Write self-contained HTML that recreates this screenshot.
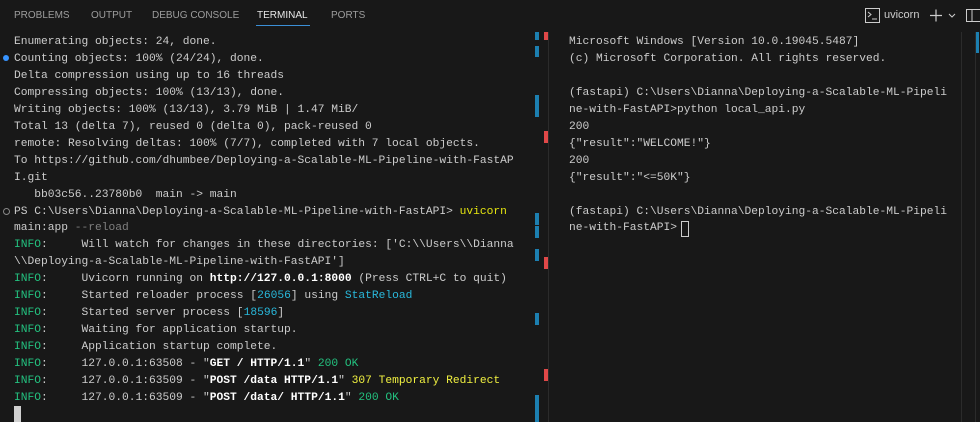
<!DOCTYPE html>
<html><head><style>
html,body{margin:0;padding:0;}
body{width:980px;height:422px;background:#181818;position:relative;overflow:hidden;font-family:"Liberation Mono",monospace;color:#cccccc;}
.tabs{position:absolute;top:0;left:0;width:980px;height:32px;font-family:"Liberation Sans",sans-serif;font-size:10px;color:#9d9d9d;}
.tabs span{position:absolute;top:10px;}
.t{position:absolute;font-size:11.26px;line-height:16.95px;white-space:pre;}
.g{color:#23c17f}.b{color:#29b8db}.y{color:#f0f040}.d{color:#7f7f7f}.w{color:#fff;font-weight:bold}.uy{color:#e5e510}
.m{position:absolute;width:4px}
.bl{background:#1c7fb0}.rd{background:#e04848}
</style></head><body>
<div class="tabs">
<span style="left:14px">PROBLEMS</span>
<span style="left:91px">OUTPUT</span>
<span style="left:152px">DEBUG CONSOLE</span>
<span style="left:257px;color:#e7e7e7">TERMINAL</span>
<span style="left:331px">PORTS</span>
<div style="position:absolute;left:256px;top:25px;width:54px;height:1px;background:#3b8fd6"></div>
<svg style="position:absolute;left:865px;top:8px" width="15" height="15" viewBox="0 0 15 15"><rect x="0.5" y="0.5" width="14" height="14" fill="none" stroke="#ccc"/><path d="M3 4l3 2.5-3 2.5M7 11h5" fill="none" stroke="#ccc"/></svg>
<span style="left:884px;top:9px;color:#ccc;font-size:11px">uvicorn</span>
<svg style="position:absolute;left:929px;top:8px" width="30" height="15"><path d="M1 7.5h12M7 1.5v12" stroke="#ccc" stroke-width="1.2"/><path d="M20 6l3 3 3-3" stroke="#ccc" fill="none"/></svg>
<svg style="position:absolute;left:966px;top:9px" width="14" height="14"><rect x="0.5" y="0.5" width="14" height="12" fill="none" stroke="#ccc"/><path d="M6 1v12" stroke="#ccc"/></svg>
</div>
<div style="position:absolute;left:3px;top:55px;width:6px;height:6px;border-radius:50%;background:#3794ff"></div>
<div style="position:absolute;left:3px;top:208px;width:5px;height:5px;border-radius:50%;border:1px solid #888"></div>
<div class="t" style="left:14px;top:34px">Enumerating objects: 24, done.
Counting objects: 100% (24/24), done.
Delta compression using up to 16 threads
Compressing objects: 100% (13/13), done.
Writing objects: 100% (13/13), 3.79 MiB | 1.47 MiB/
Total 13 (delta 7), reused 0 (delta 0), pack-reused 0
remote: Resolving deltas: 100% (7/7), completed with 7 local objects.
To https://github.com/dhumbee/Deploying-a-Scalable-ML-Pipeline-with-FastAP
I.git
   bb03c56..23780b0  main -&gt; main
PS C:\Users\Dianna\Deploying-a-Scalable-ML-Pipeline-with-FastAPI&gt; <span class="uy">uvicorn</span>
main:app <span class="d">--reload</span>
<span class="g">INFO</span>:     Will watch for changes in these directories: ['C:\\Users\\Dianna
\\Deploying-a-Scalable-ML-Pipeline-with-FastAPI']
<span class="g">INFO</span>:     Uvicorn running on <span class="w">http://127.0.0.1:8000</span> (Press CTRL+C to quit)
<span class="g">INFO</span>:     Started reloader process [<span class="b">26056</span>] using <span class="b">StatReload</span>
<span class="g">INFO</span>:     Started server process [<span class="b">18596</span>]
<span class="g">INFO</span>:     Waiting for application startup.
<span class="g">INFO</span>:     Application startup complete.
<span class="g">INFO</span>:     127.0.0.1:63508 - "<span class="w">GET / HTTP/1.1</span>" <span class="g">200 OK</span>
<span class="g">INFO</span>:     127.0.0.1:63509 - "<span class="w">POST /data HTTP/1.1</span>" <span class="y">307 Temporary Redirect</span>
<span class="g">INFO</span>:     127.0.0.1:63509 - "<span class="w">POST /data/ HTTP/1.1</span>" <span class="g">200 OK</span></div>
<div style="position:absolute;left:14px;top:406px;width:7px;height:16px;background:#d0d0d0"></div>

<div class="m bl" style="left:535px;top:32px;height:8px"></div>
<div class="m rd" style="left:544px;top:32px;height:8px"></div>
<div class="m bl" style="left:535px;top:46px;height:11px"></div>
<div class="m bl" style="left:535px;top:95px;height:22px"></div>
<div class="m rd" style="left:544px;top:131px;height:12px"></div>
<div class="m bl" style="left:535px;top:213px;height:12px"></div>
<div class="m bl" style="left:535px;top:226px;height:12px"></div>
<div class="m bl" style="left:535px;top:249px;height:12px"></div>
<div class="m rd" style="left:544px;top:257px;height:12px"></div>
<div class="m bl" style="left:535px;top:313px;height:12px"></div>
<div class="m rd" style="left:544px;top:369px;height:12px"></div>
<div class="m bl" style="left:535px;top:395px;height:27px"></div>
<div style="position:absolute;left:548px;top:32px;width:1px;height:390px;background:#2b2b2b"></div>

<div class="t" style="left:569px;top:34px">Microsoft Windows [Version 10.0.19045.5487]
(c) Microsoft Corporation. All rights reserved.

(fastapi) C:\Users\Dianna\Deploying-a-Scalable-ML-Pipeli
ne-with-FastAPI&gt;python local_api.py
200
{"result":"WELCOME!"}
200
{"result":"&lt;=50K"}

(fastapi) C:\Users\Dianna\Deploying-a-Scalable-ML-Pipeli
ne-with-FastAPI&gt;</div>
<div style="position:absolute;left:681px;top:221px;width:6px;height:14px;border:1px solid #ccc"></div>
<div style="position:absolute;left:961px;top:32px;width:1px;height:390px;background:#2b2b2b"></div>
<div style="position:absolute;left:975px;top:32px;width:1px;height:390px;background:#2b2b2b"></div>
<div style="position:absolute;left:976px;top:32px;width:3px;height:21px;background:#1c7fb0"></div>
</body></html>
